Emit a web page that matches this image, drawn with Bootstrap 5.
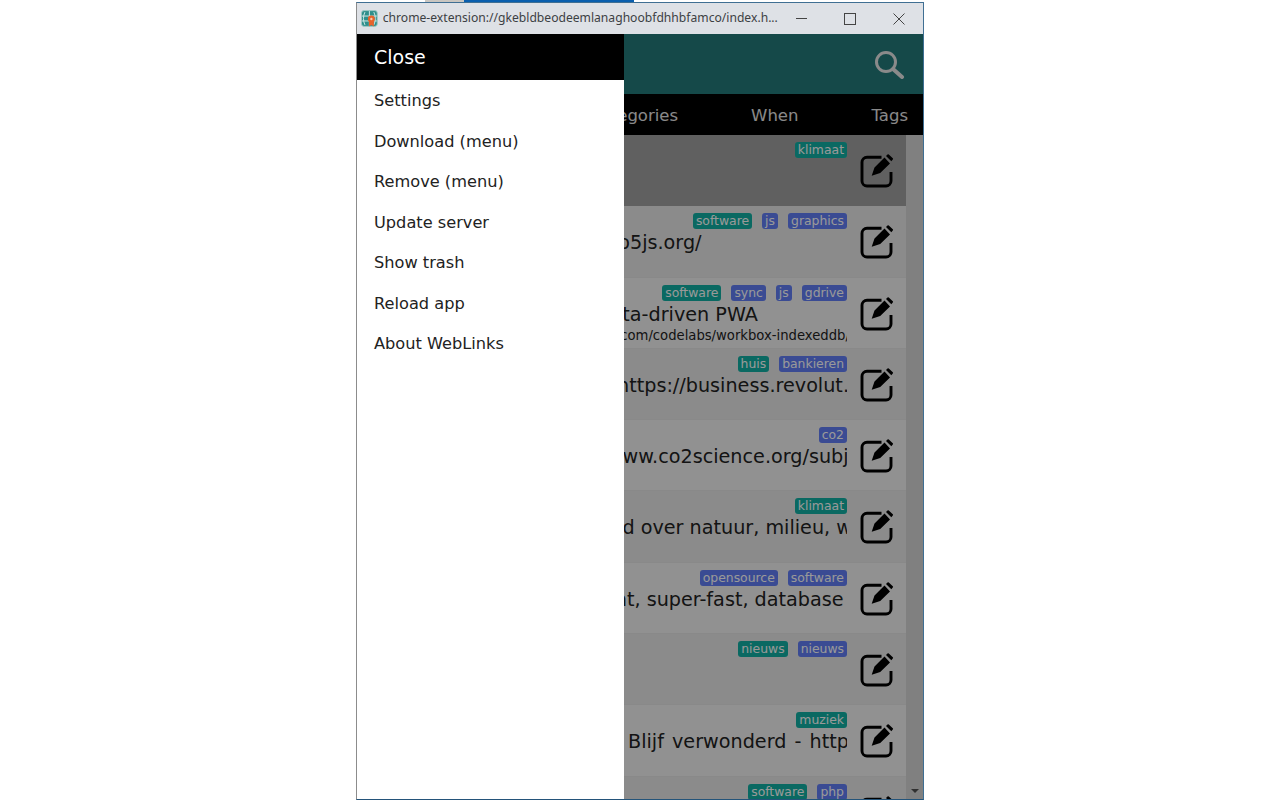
<!DOCTYPE html>
<html lang="en">
<head>
    <meta charset="UTF-8">
    <title>WebLinks</title>
    <link href="https://cdn.jsdelivr.net/npm/bootstrap@5.3.2/dist/css/bootstrap.min.css" rel="stylesheet">
    <style>
        html, body { height: 100%; overflow: hidden; background: #fff; }
        body { font-family: "DejaVu Sans", sans-serif; color: #212529; }

        .desk-strip { height: 2px; margin-left: 425px; }
        .strip-grey { width: 39px; background: #c9c6c1; }
        .strip-blue { width: 170px; background: #0a5fae; }

        .app-window { width: 568px; height: 798px; margin-left: 356px; border: 1px solid #3f6f93; border-bottom-color: #24547a; border-left-color: #8c8c8c; position: relative; overflow: hidden; }
        .title-bar { height: 31px; background: #dee1e6; flex: none; font-family: "Noto Sans", sans-serif; font-size: 12.14px; color: #3c4043; }
        .title-text { margin-left: 5px; width: 400px; white-space: nowrap; overflow: hidden; }
        .win-btn { width: 49px; height: 31px; }

        .app-head { height: 60px; background: #237b7b; flex: none; padding-right: 18px; }
        .tab-bar { height: 41px; background: #000; color: #e4e4e4; font-size: 16.5px; flex: none; padding: 3px 15px 0 0; gap: 73px; white-space: nowrap; }

        .link-list { flex: 1; min-height: 0; overflow: hidden; }
        .link-col { width: 549px; flex: none; }
        .link-row { height: 71.3px; background: #f2f2f2; border-bottom: 1px solid #e4e4e4; padding: 7px 12px 0 8px; gap: 13px; }
        .link-row:nth-child(even) { background: #e8e8e8; }
        .link-row.is-active { background: #a0a0a0; border-color: #a0a0a0; }
        .row-main { width: 482px; overflow: hidden; flex: none; }
        .tag-line { gap: 10px; height: 16px; }
        .tag-pill { font-size: 12.4px; line-height: 16px; padding: 0 3px; border-radius: 3px; color: #fff; }
        .tag-green { background: #12b0a4; }
        .tag-blue { background: #617df5; }
        .row-title { font-size: 19.2px; line-height: 28px; white-space: nowrap; color: #222; }
        .row-url { font-size: 13.2px; line-height: 14px; white-space: nowrap; color: #222; }
        .edit-icon { width: 34px; height: 34px; margin-top: 12px; flex: none; }

        /* the start of these titles sits under the drawer */
        .lead-p5 { padding-left: 184px; }
        .lead-pwa { padding-left: 144px; }
        .lead-revolut { padding-left: 252px; }
        .lead-co2 { padding-left: 173px; }
        .lead-nieuws { padding-left: 47px; }
        .lead-fast { padding-left: 143px; }
        .lead-blijf { padding-left: 263px; word-spacing: 2px; }
        .lead-url { padding-left: 82px; }

        .fake-scroll { width: 17px; background: #d6d6d6; flex: none; position: relative; }
        .scroll-arrow { position: absolute; left: 5px; bottom: 6px; width: 0; height: 0; border-left: 4px solid transparent; border-right: 4px solid transparent; border-top: 4px solid #505050; }

        .dim-layer { position: absolute; left: 0; right: 0; top: 31px; bottom: 0; background: rgba(0, 0, 0, .4); }
        .side-drawer { position: absolute; left: 0; top: 31px; bottom: 0; width: 267px; background: #fff; }
        .drawer-close { height: 45.500px; background: #000; color: #fff; font-size: 19px; padding-left: 17px; }
        .drawer-menu { padding-top: 1.500px; }
        .drawer-item { display: block; height: 40.500px; line-height: 40.500px; padding-left: 17px; font-size: 16.200px; color: #222; text-decoration: none; }
    </style>
</head>
<body>
    <div class="desk-strip d-flex">
        <div class="strip-grey"></div>
        <div class="strip-blue"></div>
    </div>

    <div class="app-window d-flex flex-column">
        <div class="title-bar d-flex align-items-center">
            <svg class="ms-1" width="17" height="17" viewBox="0 0 17 17">
                <rect x="0.500" y="0.500" width="16" height="16" rx="2.500" fill="#2f8f8b" stroke="#9fc9c6"/>
                <path d="M1 6h15M1 11h15M8.500 1v15M4 2c-2 4-2 9 0 13M13 2c2 4 2 9 0 13" stroke="#cfe8e6" fill="none"/>
                <path d="M8 10v6.500l2.500-1.500 2.500 1.500V10z" fill="#e8632b"/>
                <circle cx="10.500" cy="9" r="3.500" fill="#e8632b"/>
                <circle cx="10.500" cy="9" r="1.200" fill="#f7c9a9"/>
            </svg>
            <div class="title-text">chrome-extension://gkebldbeodeemlanaghoobfdhhbfamco/index.h...</div>
            <div class="win-btn d-flex align-items-center justify-content-center ms-auto">
                <svg width="12" height="12" viewBox="0 0 12 12"><path d="M0 5.500h11" stroke="#444"/></svg>
            </div>
            <div class="win-btn d-flex align-items-center justify-content-center">
                <svg width="12" height="12" viewBox="0 0 12 12"><rect x=".5" y=".5" width="11" height="11" fill="none" stroke="#444"/></svg>
            </div>
            <div class="win-btn d-flex align-items-center justify-content-center">
                <svg width="12" height="12" viewBox="0 0 12 12"><path d="M.5.5l11 11M11.500.5l-11 11" stroke="#444"/></svg>
            </div>
        </div>

        <div class="app-head d-flex align-items-center justify-content-end">
            <svg width="30" height="30" viewBox="0 0 30 30" fill="none" stroke="#e6e6e6">
                <circle cx="11" cy="13" r="9.500" stroke-width="3"/>
                <path d="M18 20l9 8" stroke-width="4" stroke-linecap="round"/>
            </svg>
        </div>

        <div class="tab-bar d-flex align-items-center justify-content-end">
            <span>Categories</span>
            <span>When</span>
            <span>Tags</span>
        </div>

        <div class="link-list d-flex">
            <div class="link-col">
                <div class="link-row is-active d-flex">
                    <div class="row-main">
                        <div class="tag-line d-flex justify-content-end"><span class="tag-pill tag-green">klimaat</span></div>
                    </div>
                    <svg class="edit-icon" viewBox="0 0 34 34"><use href="#icon-edit"/></svg>
                </div>
                <div class="link-row d-flex">
                    <div class="row-main">
                        <div class="tag-line d-flex justify-content-end"><span class="tag-pill tag-green">software</span><span class="tag-pill tag-blue">js</span><span class="tag-pill tag-blue">graphics</span></div>
                        <div class="row-title lead-p5">https://p5js.org/</div>
                    </div>
                    <svg class="edit-icon" viewBox="0 0 34 34"><use href="#icon-edit"/></svg>
                </div>
                <div class="link-row d-flex">
                    <div class="row-main">
                        <div class="tag-line d-flex justify-content-end"><span class="tag-pill tag-green">software</span><span class="tag-pill tag-blue">sync</span><span class="tag-pill tag-blue">js</span><span class="tag-pill tag-blue">gdrive</span></div>
                        <div class="row-title lead-pwa">Workbox data-driven PWA</div>
                        <div class="row-url lead-url">https://developers.google.com/codelabs/workbox-indexeddb/index.html</div>
                    </div>
                    <svg class="edit-icon" viewBox="0 0 34 34"><use href="#icon-edit"/></svg>
                </div>
                <div class="link-row d-flex">
                    <div class="row-main">
                        <div class="tag-line d-flex justify-content-end"><span class="tag-pill tag-green">huis</span><span class="tag-pill tag-blue">bankieren</span></div>
                        <div class="row-title lead-revolut">https://business.revolut.com/</div>
                    </div>
                    <svg class="edit-icon" viewBox="0 0 34 34"><use href="#icon-edit"/></svg>
                </div>
                <div class="link-row d-flex">
                    <div class="row-main">
                        <div class="tag-line d-flex justify-content-end"><span class="tag-pill tag-blue">co2</span></div>
                        <div class="row-title lead-co2">https://www.co2science.org/subject</div>
                    </div>
                    <svg class="edit-icon" viewBox="0 0 34 34"><use href="#icon-edit"/></svg>
                </div>
                <div class="link-row d-flex">
                    <div class="row-main">
                        <div class="tag-line d-flex justify-content-end"><span class="tag-pill tag-green">klimaat</span></div>
                        <div class="row-title lead-nieuws">Nieuws en achtergrond over natuur, milieu, wetenschap</div>
                    </div>
                    <svg class="edit-icon" viewBox="0 0 34 34"><use href="#icon-edit"/></svg>
                </div>
                <div class="link-row d-flex">
                    <div class="row-main">
                        <div class="tag-line d-flex justify-content-end"><span class="tag-pill tag-blue">opensource</span><span class="tag-pill tag-blue">software</span></div>
                        <div class="row-title lead-fast">A lightweight, super-fast, database</div>
                    </div>
                    <svg class="edit-icon" viewBox="0 0 34 34"><use href="#icon-edit"/></svg>
                </div>
                <div class="link-row d-flex">
                    <div class="row-main">
                        <div class="tag-line d-flex justify-content-end"><span class="tag-pill tag-green">nieuws</span><span class="tag-pill tag-blue">nieuws</span></div>
                    </div>
                    <svg class="edit-icon" viewBox="0 0 34 34"><use href="#icon-edit"/></svg>
                </div>
                <div class="link-row d-flex">
                    <div class="row-main">
                        <div class="tag-line d-flex justify-content-end"><span class="tag-pill tag-green">muziek</span></div>
                        <div class="row-title lead-blijf">Blijf verwonderd - https://blijfverwonderd.nl</div>
                    </div>
                    <svg class="edit-icon" viewBox="0 0 34 34"><use href="#icon-edit"/></svg>
                </div>
                <div class="link-row d-flex">
                    <div class="row-main">
                        <div class="tag-line d-flex justify-content-end"><span class="tag-pill tag-green">software</span><span class="tag-pill tag-blue">php</span></div>
                    </div>
                    <svg class="edit-icon" viewBox="0 0 34 34"><use href="#icon-edit"/></svg>
                </div>
            </div>
            <div class="fake-scroll"><div class="scroll-arrow"></div></div>
        </div>

        <div class="dim-layer"></div>
        <div class="side-drawer">
            <div class="drawer-close d-flex align-items-center">Close</div>
            <div class="drawer-menu">
                <a class="drawer-item" href="#">Settings</a>
                <a class="drawer-item" href="#">Download (menu)</a>
                <a class="drawer-item" href="#">Remove (menu)</a>
                <a class="drawer-item" href="#">Update server</a>
                <a class="drawer-item" href="#">Show trash</a>
                <a class="drawer-item" href="#">Reload app</a>
                <a class="drawer-item" href="#">About WebLinks</a>
            </div>
        </div>
    </div>

    <svg width="0" height="0" class="d-none">
        <symbol id="icon-edit" viewBox="0 0 34 34">
            <path d="M21.500 3.200H7a5 5 0 0 0-5 5V27a5 5 0 0 0 5 5h19a5 5 0 0 0 5-5V18" fill="none" stroke="#000" stroke-width="2.900"/>
            <path d="M11.700 21.700l2.800-8.200 10-10 5.500 6-9.800 9.500zM26 2l1.500-1.500a1 1 0 0 1 1.300 0l4 3.700a1 1 0 0 1 0 1.300l-1.500 1.800z" fill="#000"/>
        </symbol>
    </svg>

    <script src="https://cdn.jsdelivr.net/npm/bootstrap@5.3.2/dist/js/bootstrap.bundle.min.js"></script>
</body>
</html>
